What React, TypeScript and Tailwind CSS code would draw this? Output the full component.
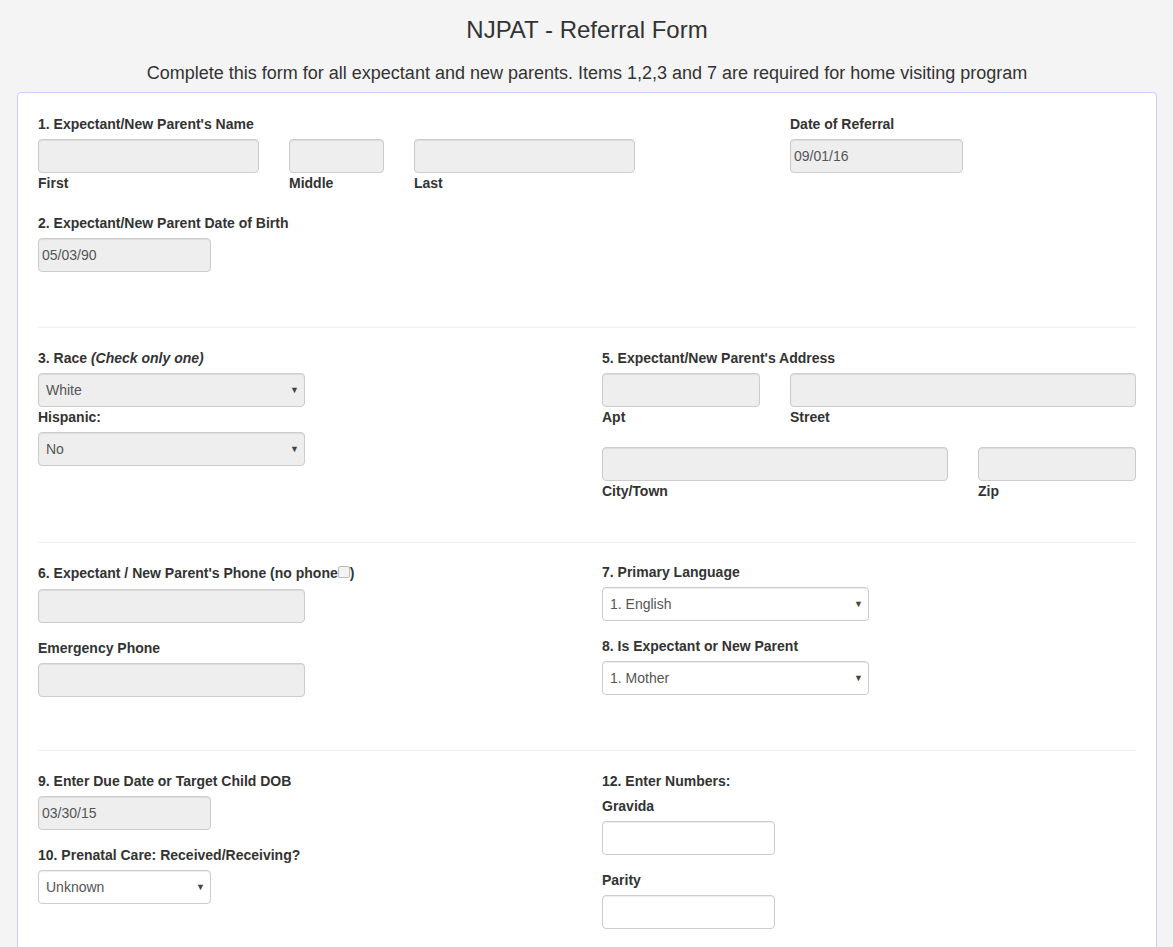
import React from 'react';

const field =
  'h-[34px] rounded-[4px] border border-[#ccc] shadow-[inset_0_1px_1px_rgba(0,0,0,0.075)] flex items-center text-[14px] text-[#555]';

function TextBox({ w, value, disabled = true }: { w: string; value?: string; disabled?: boolean }) {
  return (
    <div className={`${field} ${w} ${disabled ? 'bg-[#eee]' : 'bg-white'} px-[3px]`}>
      {value}
    </div>
  );
}

function Select({ w, value, disabled = false }: { w: string; value: string; disabled?: boolean }) {
  return (
    <div className={`${field} ${w} ${disabled ? 'bg-[#eee]' : 'bg-white'} pl-[7px] pr-[5px] justify-between`}>
      <span>{value}</span>
      <span className="text-[9px] text-[#444] leading-none">▼</span>
    </div>
  );
}

function Label({ children, className = '' }: { children: React.ReactNode; className?: string }) {
  return <div className={`text-[14px] font-bold leading-[20px] text-[#333] ${className}`}>{children}</div>;
}

function Divider() {
  return <div className="h-px bg-[#eee]" />;
}

export default function App() {
  return (
    <div className="min-h-screen bg-[#f4f4f4] font-['Liberation_Sans',Arial,sans-serif] text-[#333]">
      <div className="w-[1140px] ml-[17px]">
        <h1 className="pt-[16px] text-center text-[24px] leading-[28px] font-normal">NJPAT - Referral Form</h1>
        <p className="mt-[19px] text-center text-[18px] leading-[20px]">
          Complete this form for all expectant and new parents. Items 1,2,3 and 7 are required for home visiting program
        </p>

        <div className="mt-[9px] rounded-[4px] border border-[#ccccff] bg-white px-[20px] pt-[21px] pb-[40px]">
          {/* section 1 & 2 */}
          <div className="flex">
            <div>
              <Label className="mb-[5px]">1. Expectant/New Parent's Name</Label>
              <div className="flex gap-[30px]">
                <div>
                  <TextBox w="w-[221px]" />
                  <Label>First</Label>
                </div>
                <div>
                  <TextBox w="w-[95px]" />
                  <Label>Middle</Label>
                </div>
                <div>
                  <TextBox w="w-[221px]" />
                  <Label>Last</Label>
                </div>
              </div>
            </div>
            <div className="ml-[155px]">
              <Label className="mb-[5px]">Date of Referral</Label>
              <TextBox w="w-[173px]" value="09/01/16" />
            </div>
          </div>
          <Label className="mt-[20px] mb-[5px]">2. Expectant/New Parent Date of Birth</Label>
          <TextBox w="w-[173px]" value="05/03/90" />
          <div className="mt-[55px] mb-[20px]">
            <Divider />
          </div>

          {/* section 3 & 5 */}
          <div className="grid grid-cols-2 gap-x-[30px]">
            <div>
              <Label className="mb-[5px]">
                3. Race <i>(Check only one)</i>
              </Label>
              <Select w="w-[267px]" value="White" disabled />
              <Label className="mb-[5px]">Hispanic:</Label>
              <Select w="w-[267px]" value="No" disabled />
            </div>
            <div>
              <Label className="mb-[5px]">5. Expectant/New Parent's Address</Label>
              <div className="flex gap-[30px]">
                <div>
                  <TextBox w="w-[158px]" />
                  <Label>Apt</Label>
                </div>
                <div className="flex-1">
                  <TextBox w="w-full" />
                  <Label>Street</Label>
                </div>
              </div>
              <div className="mt-[20px] flex gap-[30px]">
                <div className="flex-1">
                  <TextBox w="w-full" />
                  <Label>City/Town</Label>
                </div>
                <div>
                  <TextBox w="w-[158px]" />
                  <Label>Zip</Label>
                </div>
              </div>
            </div>
          </div>
          <div className="mt-[41px] mb-[20px]">
            <Divider />
          </div>

          {/* section 6, 7, 8 */}
          <div className="grid grid-cols-2 gap-x-[30px]">
            <div>
              <Label className="mb-[5px] h-[21px]">
                6. Expectant / New Parent's Phone (no phone
                <span className="inline-block w-[12px] h-[12px] rounded-[2px] border border-[#bbb] bg-[#f3f3f3] align-top mt-[3px]" />)
              </Label>
              <TextBox w="w-[267px]" />
              <Label className="mt-[15px] mb-[5px]">Emergency Phone</Label>
              <TextBox w="w-[267px]" />
            </div>
            <div className="-mt-px">
              <Label className="mb-[5px]">7. Primary Language</Label>
              <Select w="w-[267px]" value="1. English" />
              <Label className="mt-[15px] mb-[5px]">8. Is Expectant or New Parent</Label>
              <Select w="w-[267px]" value="1. Mother" />
            </div>
          </div>
          <div className="mt-[53px] mb-[20px]">
            <Divider />
          </div>

          {/* section 9, 10, 12 */}
          <div className="grid grid-cols-2 gap-x-[30px]">
            <div>
              <Label className="mb-[5px]">9. Enter Due Date or Target Child DOB</Label>
              <TextBox w="w-[173px]" value="03/30/15" />
              <Label className="mt-[15px] mb-[5px]">10. Prenatal Care: Received/Receiving?</Label>
              <Select w="w-[173px]" value="Unknown" />
            </div>
            <div>
              <Label className="mb-[5px]">12. Enter Numbers:</Label>
              <Label className="mb-[5px]">Gravida</Label>
              <TextBox w="w-[173px]" disabled={false} />
              <Label className="mt-[15px] mb-[5px]">Parity</Label>
              <TextBox w="w-[173px]" disabled={false} />
            </div>
          </div>
        </div>
      </div>
    </div>
  );
}
